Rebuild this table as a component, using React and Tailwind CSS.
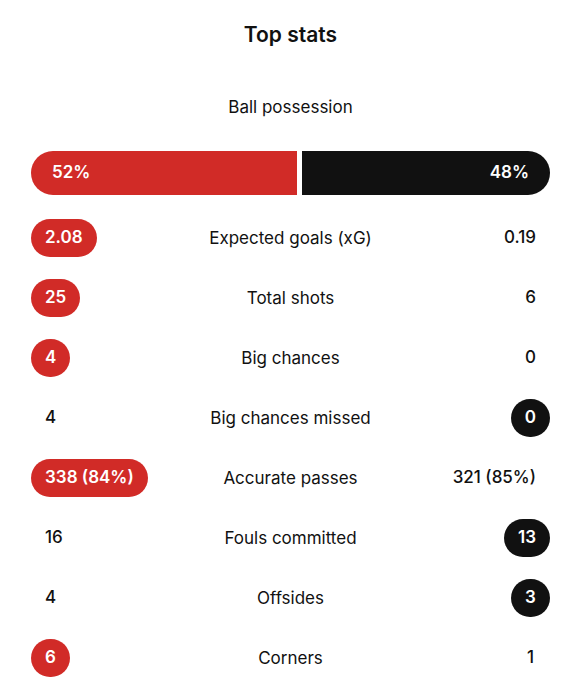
import React from "react";

const rows = [
  { label: "Expected goals (xG)", l: "2.08", r: "0.19", w: "l" },
  { label: "Total shots", l: "25", r: "6", w: "l" },
  { label: "Big chances", l: "4", r: "0", w: "l" },
  { label: "Big chances missed", l: "4", r: "0", w: "r" },
  { label: "Accurate passes", l: "338 (84%)", r: "321 (85%)", w: "l" },
  { label: "Fouls committed", l: "16", r: "13", w: "r" },
  { label: "Offsides", l: "4", r: "3", w: "r" },
  { label: "Corners", l: "6", r: "1", w: "l" },
];

function Val({ v, hl, side }) {
  if (hl === "l") {
    return (
      <span className="inline-flex h-[38px] min-w-[39px] items-center justify-center rounded-full bg-[#d12b27] px-[14px] text-[17px] font-semibold text-white">
        {v}
      </span>
    );
  }
  if (hl === "r") {
    return (
      <span className="inline-flex h-[38px] min-w-[39px] items-center justify-center rounded-full bg-[#111111] px-[14px] text-[17px] font-semibold text-white">
        {v}
      </span>
    );
  }
  return (
    <span className="inline-flex h-[38px] min-w-[39px] items-center justify-center px-[14px] text-[17px] font-medium text-[#111]">
      {v}
    </span>
  );
}

export default function App() {
  return (
    <div
      className="min-h-[696px] w-full bg-white px-[31px] pr-[32px] pt-[21px] text-[#111]"
      style={{ fontFamily: "Inter, 'Liberation Sans', sans-serif" }}
    >
      <div className="text-center text-[21px] font-semibold leading-[28px]">Top stats</div>
      <div className="mt-[46px] text-center text-[17px] leading-[24px]">Ball possession</div>
      <div className="mt-[32px] flex h-[44px] gap-[5px]">
        <div className="flex flex-[52] items-center rounded-l-full bg-[#d12b27] pl-[21px] text-[17px] font-semibold text-white">
          52%
        </div>
        <div className="flex flex-[48] items-center justify-end rounded-r-full bg-[#111111] pr-[21px] text-[17px] font-semibold text-white">
          48%
        </div>
      </div>
      <div className="mt-[13px] flex flex-col">
        {rows.map((row) => (
          <div key={row.label} className="grid h-[60px] grid-cols-[1fr_auto_1fr] items-center">
            <div className="flex justify-start">
              <Val v={row.l} hl={row.w === "l" ? "l" : null} />
            </div>
            <div className="text-center text-[17px] leading-[24px]">{row.label}</div>
            <div className="flex justify-end">
              <Val v={row.r} hl={row.w === "r" ? "r" : null} />
            </div>
          </div>
        ))}
      </div>
    </div>
  );
}
